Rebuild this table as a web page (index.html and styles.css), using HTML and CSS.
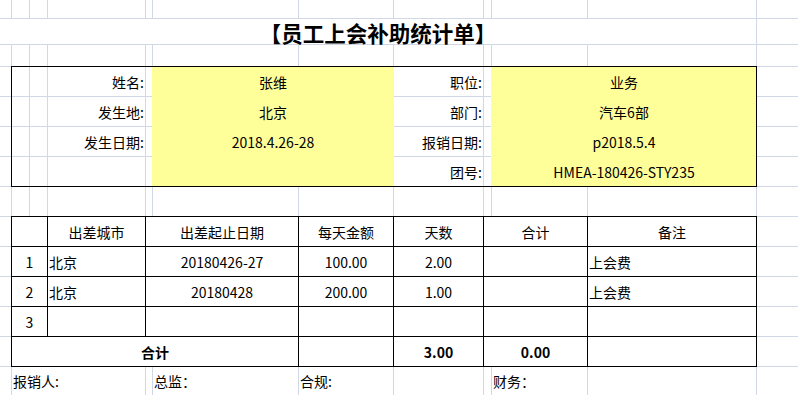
FILE: index.html
```html
<!DOCTYPE html>
<html lang="zh-CN">
<head>
<meta charset="utf-8">
<title>员工上会补助统计单</title>
<link rel="stylesheet" href="styles.css">
</head>
<body>
<div class="sheet">
  <!-- row 1 -->
  <div class="c"></div><div class="c"></div><div class="c"></div><div class="c"></div><div class="c"></div><div class="c"></div><div class="c"></div><div class="c"></div><div class="c"></div><div class="c"></div><div class="c"></div><div class="c"></div>
  <!-- row 2 -->
  <div class="c title s11">【员工上会补助统计单】</div><div class="c"></div>
  <!-- row 3 -->
  <div class="c"></div><div class="c"></div><div class="c"></div><div class="c"></div><div class="c"></div><div class="c"></div><div class="c"></div><div class="c"></div><div class="c"></div><div class="c"></div><div class="c"></div><div class="c"></div>
  <!-- rows 4-7 -->
  <div class="c"></div>
  <div class="info">
    <div class="c"></div><div class="c"></div><div class="c lab">姓名:</div><div class="c"></div><div class="c val">张维</div><div class="c lab">职位:</div><div class="c"></div><div class="c val">业务</div>
    <div class="c"></div><div class="c"></div><div class="c lab">发生地:</div><div class="c"></div><div class="c val">北京</div><div class="c lab">部门:</div><div class="c"></div><div class="c val">汽车6部</div>
    <div class="c"></div><div class="c"></div><div class="c lab">发生日期:</div><div class="c"></div><div class="c val">2018.4.26-28</div><div class="c lab">报销日期:</div><div class="c"></div><div class="c val">p2018.5.4</div>
    <div class="c"></div><div class="c"></div><div class="c lab"></div><div class="c"></div><div class="c val"></div><div class="c lab">团号:</div><div class="c"></div><div class="c val">HMEA-180426-STY235</div>
  </div>
  <div class="c"></div>
  <div class="c"></div><div class="c"></div>
  <div class="c"></div><div class="c"></div>
  <div class="c"></div><div class="c"></div>
  <!-- row 8 -->
  <div class="c"></div><div class="c"></div><div class="c"></div><div class="c"></div><div class="c"></div><div class="c"></div><div class="c"></div><div class="c"></div><div class="c"></div><div class="c"></div><div class="c"></div><div class="c"></div>
  <!-- rows 9-13 -->
  <div class="c"></div>
  <div class="tbl">
    <div class="c s2"></div><div class="c ctr">出差城市</div><div class="c ctr s2">出差起止日期</div><div class="c ctr">每天金额</div><div class="c ctr">天数</div><div class="c ctr s2">合计</div><div class="c ctr">备注</div>
    <div class="c ctr s2">1</div><div class="c left">北京</div><div class="c ctr s2">20180426-27</div><div class="c ctr">100.00</div><div class="c ctr">2.00</div><div class="c s2"></div><div class="c left">上会费</div>
    <div class="c ctr s2">2</div><div class="c left">北京</div><div class="c ctr s2">20180428</div><div class="c ctr">200.00</div><div class="c ctr">1.00</div><div class="c s2"></div><div class="c left">上会费</div>
    <div class="c ctr s2">3</div><div class="c"></div><div class="c s2"></div><div class="c"></div><div class="c"></div><div class="c s2"></div><div class="c"></div>
    <div class="c ctr bold s5">合计</div><div class="c"></div><div class="c ctr bold">3.00</div><div class="c ctr bold s2">0.00</div><div class="c"></div>
  </div>
  <div class="c"></div>
  <div class="c"></div><div class="c"></div>
  <div class="c"></div><div class="c"></div>
  <div class="c"></div><div class="c"></div>
  <div class="c"></div><div class="c"></div>
  <!-- row 14 -->
  <div class="c"></div><div class="c left s3">报销人:</div><div class="c"></div><div class="c left">总监：</div><div class="c left">合规:</div><div class="c"></div><div class="c"></div><div class="c left">财务：</div><div class="c"></div><div class="c"></div>
</div>
</body>
</html>
```

FILE: styles.css
```css
html, body {
  margin: 0;
  padding: 0;
  background: #ffffff;
  overflow: hidden;
}

.sheet {
  display: grid;
  grid-template-columns: 11px 17px 17px 97px 6px 145px 94px 89px 7px 95px 168px 1fr;
  grid-template-rows: 18px 25px 21px repeat(10, 29px) 28px;
  gap: 1px;
  width: 798px;
  height: 395px;
  background: #d0d7e5;
  font-family: "Noto Sans CJK SC", "Microsoft YaHei", sans-serif;
  font-size: 14px;
  line-height: 1;
  color: #000000;
}

.c {
  background: #ffffff;
  display: flex;
  align-items: center;
  white-space: nowrap;
  min-width: 0;
}

.s2 { grid-column: span 2; }
.s3 { grid-column: span 3; }
.s5 { grid-column: span 5; }
.s11 { grid-column: span 11; }

.title {
  justify-content: center;
  font-size: 21.5px;
  font-weight: bold;
  padding-top: 2px;
}

.info {
  grid-column: span 10;
  grid-row: span 4;
  display: grid;
  grid-template-columns: subgrid;
  grid-template-rows: subgrid;
  background: #d0d7e5;
  outline: 1px solid #000000;
}

.lab {
  justify-content: flex-end;
  padding-right: 1px;
}

.val {
  grid-column: span 2;
  justify-content: center;
  background: #ffff99;
  box-shadow: 0 0 0 1px #ffff99;
}

.tbl {
  grid-column: span 10;
  grid-row: span 5;
  display: grid;
  grid-template-columns: subgrid;
  grid-template-rows: subgrid;
  background: #000000;
  outline: 1px solid #000000;
}

.ctr { justify-content: center; }

.left {
  justify-content: flex-start;
  padding-left: 1px;
}

.bold { font-weight: bold; }
```
